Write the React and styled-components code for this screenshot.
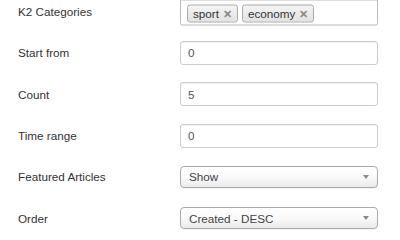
import React from "react";
import styled, { createGlobalStyle } from "styled-components";

const Global = createGlobalStyle`
  html, body { margin: 0; padding: 0; background: #fff; }
  body { font-family: "Liberation Sans", Arial, sans-serif; font-size: 11.7px; color: #333; }
`;

const Form = styled.div`
  width: 400px;
  margin-top: -9px;
  display: flex;
  flex-direction: column;
`;

const Row = styled.div`
  height: 41.3px;
  display: grid;
  grid-template-columns: 180px 198px;
  align-items: center;
`;

const Label = styled.div`
  padding-left: 18px;
  color: #333;
  font-size: 11.7px;
`;

const Input = styled.div`
  box-sizing: border-box;
  height: 24px;
  border: 1px solid #ccc;
  border-radius: 3px;
  box-shadow: inset 0 1px 1px rgba(0,0,0,0.06);
  padding: 0 7px;
  display: flex;
  align-items: center;
  color: #555;
  background: #fff;
`;

const TagBox = styled.div`
  box-sizing: border-box;
  height: 26px;
  border: 1px solid #bbb;
  border-radius: 0 0 2px 2px;
  padding: 0 6px;
  display: flex;
  align-items: center;
  gap: 4px;
  background: #fff;
  transform: translateY(0.5px);
`;

const Tag = styled.span`
  box-sizing: border-box;
  height: 18px;
  display: inline-flex;
  align-items: center;
  gap: 4px;
  padding: 0 5px 0 5px;
  border: 1px solid #aaa;
  border-radius: 3px;
  background: linear-gradient(#f4f4f4, #e2e2e2);
  color: #333;
  font-size: 11.7px;
  margin-top: 2px;
`;

const Remove = styled.span`
  color: #888;
  font-weight: bold;
  font-size: 10.5px;
`;

const Select = styled.div`
  box-sizing: border-box;
  height: 22px;
  border: 1px solid #aaa;
  border-radius: 4px;
  background: linear-gradient(#ffffff 0%, #fafafa 50%, #eaeaea 100%);
  padding: 0 8px;
  display: flex;
  align-items: center;
  justify-content: space-between;
  color: #444;
  box-shadow: 0 1px 0 rgba(0,0,0,0.04);
`;

const Arrow = styled.span`
  width: 0;
  height: 0;
  border-left: 3.5px solid transparent;
  border-right: 3.5px solid transparent;
  border-top: 4px solid #888;
`;

export default function App() {
  return (
    <>
      <Global />
      <Form>
        <Row>
          <Label>K2 Categories</Label>
          <TagBox>
            <Tag>sport <Remove>✕</Remove></Tag>
            <Tag>economy <Remove>✕</Remove></Tag>
          </TagBox>
        </Row>
        <Row>
          <Label>Start from</Label>
          <Input>0</Input>
        </Row>
        <Row>
          <Label>Count</Label>
          <Input>5</Input>
        </Row>
        <Row>
          <Label>Time range</Label>
          <Input>0</Input>
        </Row>
        <Row>
          <Label>Featured Articles</Label>
          <Select>Show<Arrow /></Select>
        </Row>
        <Row>
          <Label>Order</Label>
          <Select>Created - DESC<Arrow /></Select>
        </Row>
      </Form>
    </>
  );
}
